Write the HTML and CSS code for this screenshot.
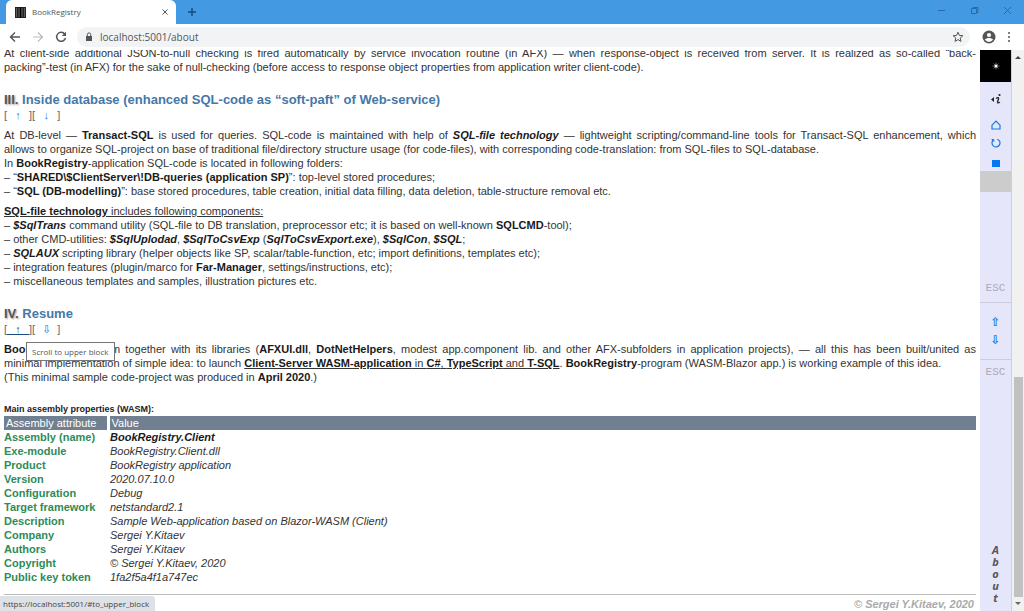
FILE: index.html
```html
<!DOCTYPE html>
<html lang="en">
<head>
<meta charset="utf-8">
<title>BookRegistry</title>
<link rel="stylesheet" href="styles.css">
</head>
<body>
<header class="tabs">
  <div class="tab">
    <svg class="favicon" viewBox="0 0 11 11"><path d="M0 0h11v11H0z" fill="#222"/><path d="M1.500 1v9M4 1v9M7 1v9M9.500 1v9" stroke="#888" stroke-width=".6"/><path d="M5.500 0v11" stroke="#000"/></svg>
    <span class="tab-title">BookRegistry</span>
    <button class="icon-btn tab-close" aria-label="Close tab"><svg width="8" height="8" viewBox="0 0 8 8"><path d="M1.500 1.500l5 5m0-5l-5 5" stroke="#555"/></svg></button>
  </div>
  <button class="icon-btn new-tab" aria-label="New tab"><svg width="10" height="10" viewBox="0 0 10 10"><path d="M5 1v8M1 5h8" stroke="#174c7c" stroke-width="1.500"/></svg></button>
  <div class="window-controls">
    <button class="icon-btn" aria-label="Minimize"><svg width="9" height="9" viewBox="0 0 9 9"><path d="M1 4.500h7" stroke="#286aa5"/></svg></button>
    <button class="icon-btn" aria-label="Restore"><svg width="9" height="9" viewBox="0 0 9 9"><path d="M1.500 2.500h5v5h-5zM3 2.500v-1h5v5H6.500" fill="none" stroke="#286aa5"/></svg></button>
    <button class="icon-btn" aria-label="Close"><svg width="9" height="9" viewBox="0 0 9 9"><path d="M1 1l7 7m0-7l-7 7" stroke="#286aa5"/></svg></button>
  </div>
</header>
<nav class="toolbar">
  <button class="icon-btn" aria-label="Back"><svg width="12" height="12" viewBox="0 0 12 12"><path d="M11 6H2M6 1.500L1.500 6 6 10.500" fill="none" stroke="#555" stroke-width="1.400"/></svg></button>
  <button class="icon-btn" aria-label="Forward"><svg width="12" height="12" viewBox="0 0 12 12"><path d="M1 6h9M6 1.500L10.500 6 6 10.500" fill="none" stroke="#bbb" stroke-width="1.200"/></svg></button>
  <button class="icon-btn" aria-label="Reload"><svg width="12" height="12" viewBox="0 0 12 12"><path d="M9.800 3.200A4.500 4.500 0 1 0 10.500 7" fill="none" stroke="#555" stroke-width="1.500"/><path d="M11 .8V5H6.800z" fill="#555"/></svg></button>
  <div class="address">
    <svg width="8" height="10" viewBox="0 0 8 10"><path d="M1 4h6v5H1z" fill="#555"/><path d="M2.300 4V2.600a1.700 1.700 0 0 1 3.400 0V4" fill="none" stroke="#555"/></svg>
    <input class="url" aria-label="Address" value="localhost:5001/about">
    <button class="icon-btn" aria-label="Bookmark"><svg width="12" height="12" viewBox="0 0 12 12"><path d="M6 1.200l1.400 3.200 3.500.3-2.700 2.300.8 3.400L6 8.600l-3 1.800.8-3.400L1.100 4.700l3.500-.3z" fill="none" stroke="#555"/></svg></button>
  </div>
  <button class="icon-btn profile" aria-label="Profile"><svg width="14" height="14" viewBox="0 0 14 14"><circle cx="7" cy="7" r="6.500" fill="#555"/><circle cx="7" cy="5" r="2.100" fill="#fff"/><path d="M2.800 9.600c1.800-2.200 6.600-2.200 8.400 0a5 5 0 0 1-8.400 0z" fill="#fff"/></svg></button>
  <button class="icon-btn" aria-label="Menu"><svg width="4" height="12" viewBox="0 0 4 12" fill="#555"><circle cx="2" cy="2" r="1"/><circle cx="2" cy="6" r="1"/><circle cx="2" cy="10" r="1"/></svg></button>
</nav>
<div class="view">
  <main class="page">
    <p class="text intro"><span class="full">At client-side additional JSON-to-null checking is fired automatically by service invocation routine (in AFX) — when response-object is received from server. It is realized as so-called “back-</span>packing”-test (in AFX) for the sake of null-checking (before access to response object properties from application writer client-code).</p>
    <h2><span class="num">III.</span> Inside database (enhanced SQL-code as “soft-paft” of Web-service)</h2>
    <div class="jump">[<a href="#up">↑</a>][<a href="#down">↓</a>]</div>
    <p class="text"><span class="full">At DB-level — <b>Transact-SQL</b> is used for queries. SQL-code is maintained with help of <b><i>SQL-file technology</i></b> — lightweight scripting/command-line tools for Transact-SQL enhancement, which</span> allows to organize SQL-project on base of traditional file/directory structure usage (for code-files), with corresponding code-translation: from SQL-files to SQL-database.<br>
    In <b>BookRegistry</b>-application SQL-code is located in following folders:<br>
    – “<b>SHARED\$ClientServer\!DB-queries (application SP)</b>”: top-level stored procedures;<br>
    – “<b>SQL (DB-modelling)</b>”: base stored procedures, table creation, initial data filling, data deletion, table-structure removal etc.</p>
    <p class="text list"><u><b>SQL-file technology</b> includes following components:</u><br>
    – <b><i>$SqlTrans</i></b> command utility (SQL-file to DB translation, preprocessor etc; it is based on well-known <b>SQLCMD</b>-tool);<br>
    – other CMD-utilities: <b><i>$SqlUplodad</i></b>, <b><i>$SqlToCsvExp</i></b> (<b><i>SqlToCsvExport.exe</i></b>), <b><i>$SqlCon</i></b>, <b><i>$SQL</i></b>;<br>
    – <b><i>SQLAUX</i></b> scripting library (helper objects like SP, scalar/table-function, etc; import definitions, templates etc);<br>
    – integration features (plugin/marco for <b>Far-Manager</b>, settings/instructions, etc);<br>
    – miscellaneous templates and samples, illustration pictures etc.</p>
    <h2><span class="num">IV.</span> Resume</h2>
    <div class="jump">[<a class="hovered" href="#to_upper_block">↑</a>][<a href="#end">⇩</a>]<span class="tooltip" role="tooltip">Scroll to upper block</span></div>
    <p class="text"><span class="full"><b>BookRegistry</b>-program together with its libraries (<b>AFXUI.dll</b>, <b>DotNetHelpers</b>, modest app.component lib. and other AFX-subfolders in application projects), — all this has been built/united as</span> minimal implementation of simple idea: to launch <u><b>Client-Server WASM-application</b> in <b>C#</b>, <b>TypeScript</b> and <b>T-SQL</b></u>. <b>BookRegistry</b>-program (WASM-Blazor app.) is working example of this idea.<br>(This minimal sample code-project was produced in <b>April 2020</b>.)</p>
    <table class="props">
      <caption>Main assembly properties (WASM):</caption>
      <thead><tr><th>Assembly attribute</th><th>Value</th></tr></thead>
      <tbody>
      <tr><th>Assembly (name)</th><td><b>BookRegistry.Client</b></td></tr>
      <tr><th>Exe-module</th><td>BookRegistry.Client.dll</td></tr>
      <tr><th>Product</th><td>BookRegistry application</td></tr>
      <tr><th>Version</th><td>2020.07.10.0</td></tr>
      <tr><th>Configuration</th><td>Debug</td></tr>
      <tr><th>Target framework</th><td>netstandard2.1</td></tr>
      <tr><th>Description</th><td>Sample Web-application based on Blazor-WASM (Client)</td></tr>
      <tr><th>Company</th><td>Sergei Y.Kitaev</td></tr>
      <tr><th>Authors</th><td>Sergei Y.Kitaev</td></tr>
      <tr><th>Copyright</th><td>© Sergei Y.Kitaev, 2020</td></tr>
      <tr><th>Public key token</th><td>1fa2f5a4f1a747ec</td></tr>
      </tbody>
    </table>
    <footer class="foot">© Sergei Y.Kitaev, 2020</footer>
  </main>
  <aside class="side">
    <button class="side-btn logo" aria-label="Logo"><svg width="8" height="8" viewBox="0 0 8 8"><path d="M4 .5v7M.5 4h7M1.500 1.500l5 5m0-5l-5 5" stroke="#aaa" stroke-width=".6"/><circle cx="4" cy="4" r="1.500" fill="#fff"/></svg></button>
    <div class="group tools">
      <button class="side-btn info" aria-label="Info"><svg width="12" height="12" viewBox="0 0 12 12"><path d="M4 4v5L1 6.500z" fill="#222"/><path d="M6 5.500q3-1.800 2.500.5L7.500 9q-.2 1.700 2.500.2" fill="none" stroke="#222" stroke-width="1.300"/><circle cx="9.500" cy="2" r="1.100" fill="#222"/></svg></button>
      <button class="side-btn home" aria-label="Home"><svg width="10" height="10" viewBox="0 0 10 10"><path d="M1 9V5.200L5 1l4 4.200V9z" fill="none" stroke="#1878df" stroke-width="1.200"/></svg></button>
      <button class="side-btn reload" aria-label="Refresh"><svg width="10" height="10" viewBox="0 0 10 10"><path d="M6.300 1.200A4 4 0 1 1 2.300 2" fill="none" stroke="#1878df" stroke-width="1.200"/><path d="M.6 1.500h2.200v2.300" fill="none" stroke="#1878df"/></svg></button>
      <button class="side-btn square" aria-label="Stop"><svg width="8" height="7"><path d="M0 0h8v7H0z" fill="#0878f0"/></svg></button>
      <div class="block"></div>
      <button class="side-btn esc">ESC</button>
    </div>
    <div class="group arrows"><button class="side-btn">⇧</button><button class="side-btn">⇩</button></div>
    <div class="group about"><button class="side-btn esc">ESC</button><div class="vertical"><span>A</span><span>b</span><span>o</span><span>u</span><span>t</span></div></div>
  </aside>
  <div class="scrollbar">
    <svg width="6" height="4" viewBox="0 0 6 4"><path d="M0 4l3-3 3 3z" fill="#444"/></svg>
    <div class="thumb"></div>
    <svg width="6" height="4" viewBox="0 0 6 4"><path d="M0 0l3 3 3-3z" fill="#666"/></svg>
  </div>
  <div class="status">https://localhost:5001/#to_upper_block</div>
</div>
</body>
</html>
```
FILE: styles.css
```css
* { box-sizing: border-box; }
body {
  margin: 0;
  height: 100vh;
  display: flex;
  flex-direction: column;
  overflow: hidden;
  background: #fff;
  color: #333;
  font: 11px/14px "Liberation Sans", Arial, sans-serif;
}
button { font: inherit; color: inherit; border: 0; background: none; padding: 0; }
.icon-btn { display: flex; align-items: center; justify-content: center; }
.tabs { flex: none; height: 24px; display: flex; align-items: center; background: #449ae2; padding-left: 6px; }
.tab { width: 170px; height: 24px; display: flex; align-items: center; gap: 6px; padding: 0 7px 0 9px; background: #fff; border-radius: 6px 6px 0 0; }
.favicon { width: 11px; height: 11px; }
.tab-title { flex: 1; font: 8px/12px "Open Sans", sans-serif; color: #555; }
.new-tab { margin-left: 11px; }
.window-controls { margin-left: auto; display: flex; gap: 24px; padding: 0 12px 4px 0; }
.toolbar { flex: none; height: 26px; display: flex; align-items: center; gap: 11px; padding: 0 13px 0 9px; }
.toolbar .profile { margin-left: 1px; }
.address { flex: 1; height: 20px; display: flex; align-items: center; gap: 7px; padding: 0 6px 0 8px; margin-left: -1px; background: #f1f3f4; border-radius: 10px; }
.url { flex: 1; height: 18px; border: 0; padding: 0; background: none; color: #555; font: 10px/18px "Open Sans", sans-serif; outline: 0; }
.view { flex: 1; min-height: 0; display: flex; position: relative; }
.page { flex: 1; min-width: 0; padding: 0 4px; display: flex; flex-direction: column; justify-content: flex-end; overflow: hidden; }
.text { margin: 0; text-align: justify; }
.full { display: block; text-align-last: justify; }
.text b, .props td b { color: #1a1a1a; }
h2 { margin: 18px 0 0; font-size: 13px; line-height: 16px; color: #4478a8; }
.num { color: #555; text-shadow: 1px 1px 2px #999; }
.jump { height: 14px; margin-bottom: 6px; position: relative; color: #666; }
.jump a { display: inline-block; width: 22px; height: 13px; text-align: center; color: #1878df; text-decoration: none; }
.jump a.hovered { border-bottom: 1px solid #174c7c; color: #174c7c; }
.tooltip { position: absolute; left: 22px; top: 20px; padding: 2px 6px 2px 5px; border: 1px solid #777; background: #fff; color: #555; font: 8px/13px "Open Sans", sans-serif; white-space: nowrap; }
.list { margin-top: 6px; }
.props { margin-top: 19px; width: 100%; border-collapse: collapse; text-align: left; }
.props caption { text-align: left; font-size: 9px; font-weight: bold; color: #222; line-height: 13px; }
.props th, .props td { padding: 0 2px; height: 14px; }
.props thead th { background: #708090; color: #fff; font-weight: normal; }
.props thead th:first-child { width: 104px; border-right: 3px solid #fff; }
.props tbody th { color: #2e8b57; padding-left: 0; }
.props td { font-style: italic; padding-left: 2px; }
.foot { margin-top: 10px; border-top: 1px solid #bbb; padding: 2px 2px 0 0; text-align: right; color: #aaa; font-weight: bold; font-style: italic; }
.side { flex: none; width: 32px; display: flex; flex-direction: column; background: #e6e6fa; border-right: 1px solid #d0d0dd; }
.side-btn { display: flex; align-items: center; justify-content: center; width: 100%; }
.logo { height: 32px; background: #000; }
.group { display: flex; flex-direction: column; border-bottom: 1px solid #ccd; }
.tools { height: 221px; }
.info { height: 34px; }
.home { height: 17px; }
.reload { height: 19px; }
.square { height: 19px; padding-top: 4px; }
.block { height: 21px; background: #ccc; }
.tools .esc { margin-top: auto; }
.esc { color: #aaaabc; height: 14px; margin-bottom: 7px; font: 11px/14px "Liberation Mono", monospace; }
.arrows { height: 57px; justify-content: center; gap: 4px; color: #1878df; font: bold 12px/14px "DejaVu Sans", sans-serif; }
.about { flex: 1; border: 0; padding-top: 5px; }
.vertical { margin-top: auto; padding-bottom: 7px; display: flex; flex-direction: column; align-items: center; font: italic bold 11px/12px "Open Sans", sans-serif; color: #555; }
.scrollbar { flex: none; width: 12px; background: #f1f1f1; display: flex; flex-direction: column; align-items: center; justify-content: space-between; padding: 5px 0; }
.thumb { width: 9px; height: 40%; margin: auto 0 5px; background: #c1c1c1; }
.status { position: absolute; left: 0; bottom: 0; padding: 1px 6px 1px 3px; background: #dee1e6; border-radius: 0 3px 0 0; color: #444; font: 8px/13px "Open Sans", sans-serif; }
```
